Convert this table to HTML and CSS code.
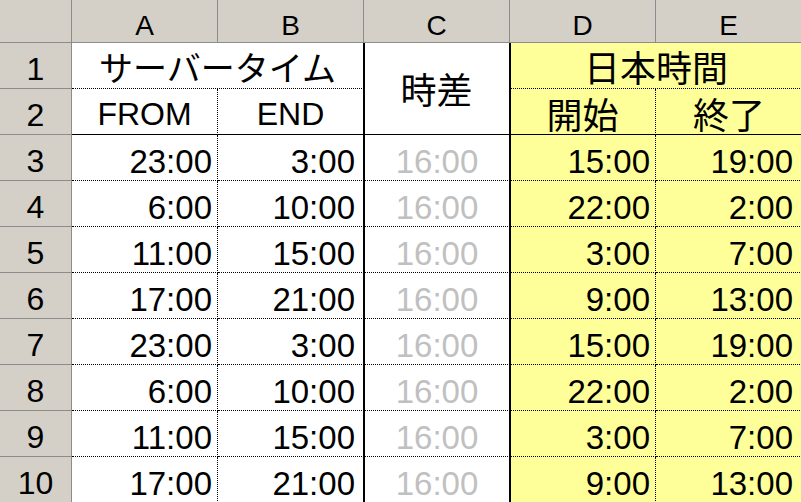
FILE: index.html
```html
<!DOCTYPE html>
<html lang="ja">
<head>
<meta charset="utf-8">
<title>時差表</title>
<link rel="stylesheet" href="styles.css">
</head>
<body>
<div class="sheet">
  <div class="corner"></div>
  <div class="colhead">A</div>
  <div class="colhead">B</div>
  <div class="colhead">C</div>
  <div class="colhead">D</div>
  <div class="colhead">E</div>

  <div class="rowhead">1</div>
  <div class="cell server jp kana">サーバータイム</div>
  <div class="cell c diff jp">時差</div>
  <div class="cell japan jp">日本時間</div>

  <div class="rowhead">2</div>
  <div class="cell a sub lat">FROM</div>
  <div class="cell b sub lat">END</div>
  <div class="cell d sub jp">開始</div>
  <div class="cell e sub jp">終了</div>

  <div class="rowhead">3</div>
  <div class="cell a num">23:00</div><div class="cell b num">3:00</div><div class="cell c num gray">16:00</div><div class="cell d num">15:00</div><div class="cell e num">19:00</div>
  <div class="rowhead">4</div>
  <div class="cell a num">6:00</div><div class="cell b num">10:00</div><div class="cell c num gray">16:00</div><div class="cell d num">22:00</div><div class="cell e num">2:00</div>
  <div class="rowhead">5</div>
  <div class="cell a num">11:00</div><div class="cell b num">15:00</div><div class="cell c num gray">16:00</div><div class="cell d num">3:00</div><div class="cell e num">7:00</div>
  <div class="rowhead">6</div>
  <div class="cell a num">17:00</div><div class="cell b num">21:00</div><div class="cell c num gray">16:00</div><div class="cell d num">9:00</div><div class="cell e num">13:00</div>
  <div class="rowhead">7</div>
  <div class="cell a num">23:00</div><div class="cell b num">3:00</div><div class="cell c num gray">16:00</div><div class="cell d num">15:00</div><div class="cell e num">19:00</div>
  <div class="rowhead">8</div>
  <div class="cell a num">6:00</div><div class="cell b num">10:00</div><div class="cell c num gray">16:00</div><div class="cell d num">22:00</div><div class="cell e num">2:00</div>
  <div class="rowhead">9</div>
  <div class="cell a num">11:00</div><div class="cell b num">15:00</div><div class="cell c num gray">16:00</div><div class="cell d num">3:00</div><div class="cell e num">7:00</div>
  <div class="rowhead">10</div>
  <div class="cell a num">17:00</div><div class="cell b num">21:00</div><div class="cell c num gray">16:00</div><div class="cell d num">9:00</div><div class="cell e num">13:00</div>
</div>
</body>
</html>
```
FILE: styles.css
```css
html, body {
  margin: 0;
  padding: 0;
  background: #ffffff;
  overflow: hidden;
}

.sheet {
  display: grid;
  grid-template-columns: 72px repeat(5, 146px);
  grid-template-rows: 43px repeat(10, 46px);
  width: 802px;
  font-family: "Liberation Sans", Arial, sans-serif;
  color: #000;
}

.corner,
.colhead,
.rowhead,
.cell {
  box-sizing: border-box;
  display: flex;
  align-items: center;
  justify-content: center;
  white-space: nowrap;
  line-height: 1;
}

.corner,
.colhead,
.rowhead {
  background: #d4d0c8;
  border-right: 1px solid #8c8c8c;
  border-bottom: 1px solid #8c8c8c;
}

.colhead {
  font-size: 28px;
  padding-top: 9px;
}

.rowhead {
  font-size: 32px;
  padding-top: 6px;
}

.cell {
  border-bottom: 1px dotted #000;
}

.a { border-right: 1px dotted #000; }
.b { border-right: 1px solid #000; }
.c {
  border-right: 1px solid #000;
  box-shadow: inset 1px 0 0 #000;
}
.d {
  background: #ffff99;
  border-right: 1px dotted #000;
  box-shadow: inset 1px 0 0 #000;
}
.e { background: #ffff99; }

.jp {
  font-family: "Noto Sans CJK JP", "Liberation Sans", sans-serif;
  font-size: 36px;
}

.kana { font-size: 34px; }

.server {
  grid-column: span 2;
  border-right: 1px solid #000;
  padding-top: 3px;
}

.diff {
  grid-row: span 2;
  border-bottom: 1px solid #000;
  padding-bottom: 2px;
}

.japan {
  grid-column: span 2;
  background: #ffff99;
  box-shadow: inset 1px 0 0 #000;
  padding-top: 1px;
}

.sub {
  border-bottom: 1px solid #000;
}

.sub.lat {
  font-size: 32px;
  padding-top: 4px;
}

.sub.jp {
  padding-top: 2px;
}

.num {
  font-size: 33px;
  padding-top: 8px;
  justify-content: flex-end;
}

.a.num { padding-right: 5px; }
.b.num { padding-right: 8px; }
.d.num { padding-right: 5px; }
.e.num { padding-right: 9px; }

.c.num {
  justify-content: center;
  padding-left: 1px;
}

.gray { color: #c0c0c0; }
```
